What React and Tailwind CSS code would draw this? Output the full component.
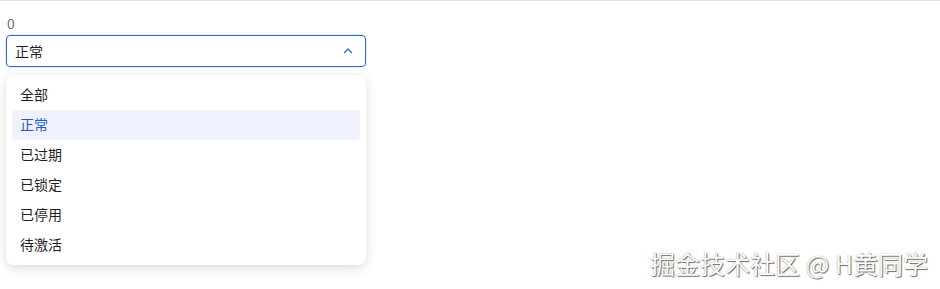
import React from "react";

const items = ["全部", "正常", "已过期", "已锁定", "已停用", "待激活"];

export default function App() {
  return (
    <div
      className="relative w-[940px] h-[289px] bg-white border-t border-[#e3e3e3] overflow-hidden"
      style={{ fontFamily: '"Noto Sans CJK SC", "Noto Sans", sans-serif' }}
    >
      <div className="pl-[6px] pt-[12px] w-[366px]">
        <div className="h-[20px] leading-[20px] text-[14px] text-[#6b6b6b] pl-[1px]">0</div>
        <div className="mt-[2px] h-[32px] flex items-center justify-between rounded-[4px] border border-[#2f6ad0] shadow-[0_0_0_1px_rgba(90,140,230,0.18)] pl-[8px] pr-[11px]">
          <span className="text-[14px] text-[#1f1f1f] leading-none">正常</span>
          <svg width="12" height="12" viewBox="0 0 12 12" fill="none">
            <path d="M2.5 7.5 L6 4 L9.5 7.5" stroke="#2f6ad0" strokeWidth="1.4" strokeLinecap="round" strokeLinejoin="round" />
          </svg>
        </div>
        <div className="mt-[8px] rounded-[8px] bg-white shadow-[0_3px_12px_rgba(0,0,0,0.14)] py-[5px] px-[6px]">
          {items.map((t) => {
            const active = t === "正常";
            return (
              <div
                key={t}
                className={
                  active
                    ? "h-[30px] flex items-center px-[8px] pb-[2px] rounded-[4px] bg-[#eff2fd] text-[#1d5cc0] text-[14px]"
                    : "h-[30px] flex items-center px-[8px] pb-[2px] rounded-[4px] text-[#1f1f1f] text-[14px]"
                }
              >
                {t}
              </div>
            );
          })}
        </div>
      </div>
      <div
        className="absolute right-[12px] top-[249px] text-[25px] leading-[26px] text-white [text-shadow:1px_1px_1px_rgba(0,0,0,0.55),0_0_1px_rgba(0,0,0,0.5)]"
        style={{ fontFamily: '"Noto Sans CJK SC", sans-serif' }}
      >
        掘金技术社区 @ H黄同学
      </div>
    </div>
  );
}
